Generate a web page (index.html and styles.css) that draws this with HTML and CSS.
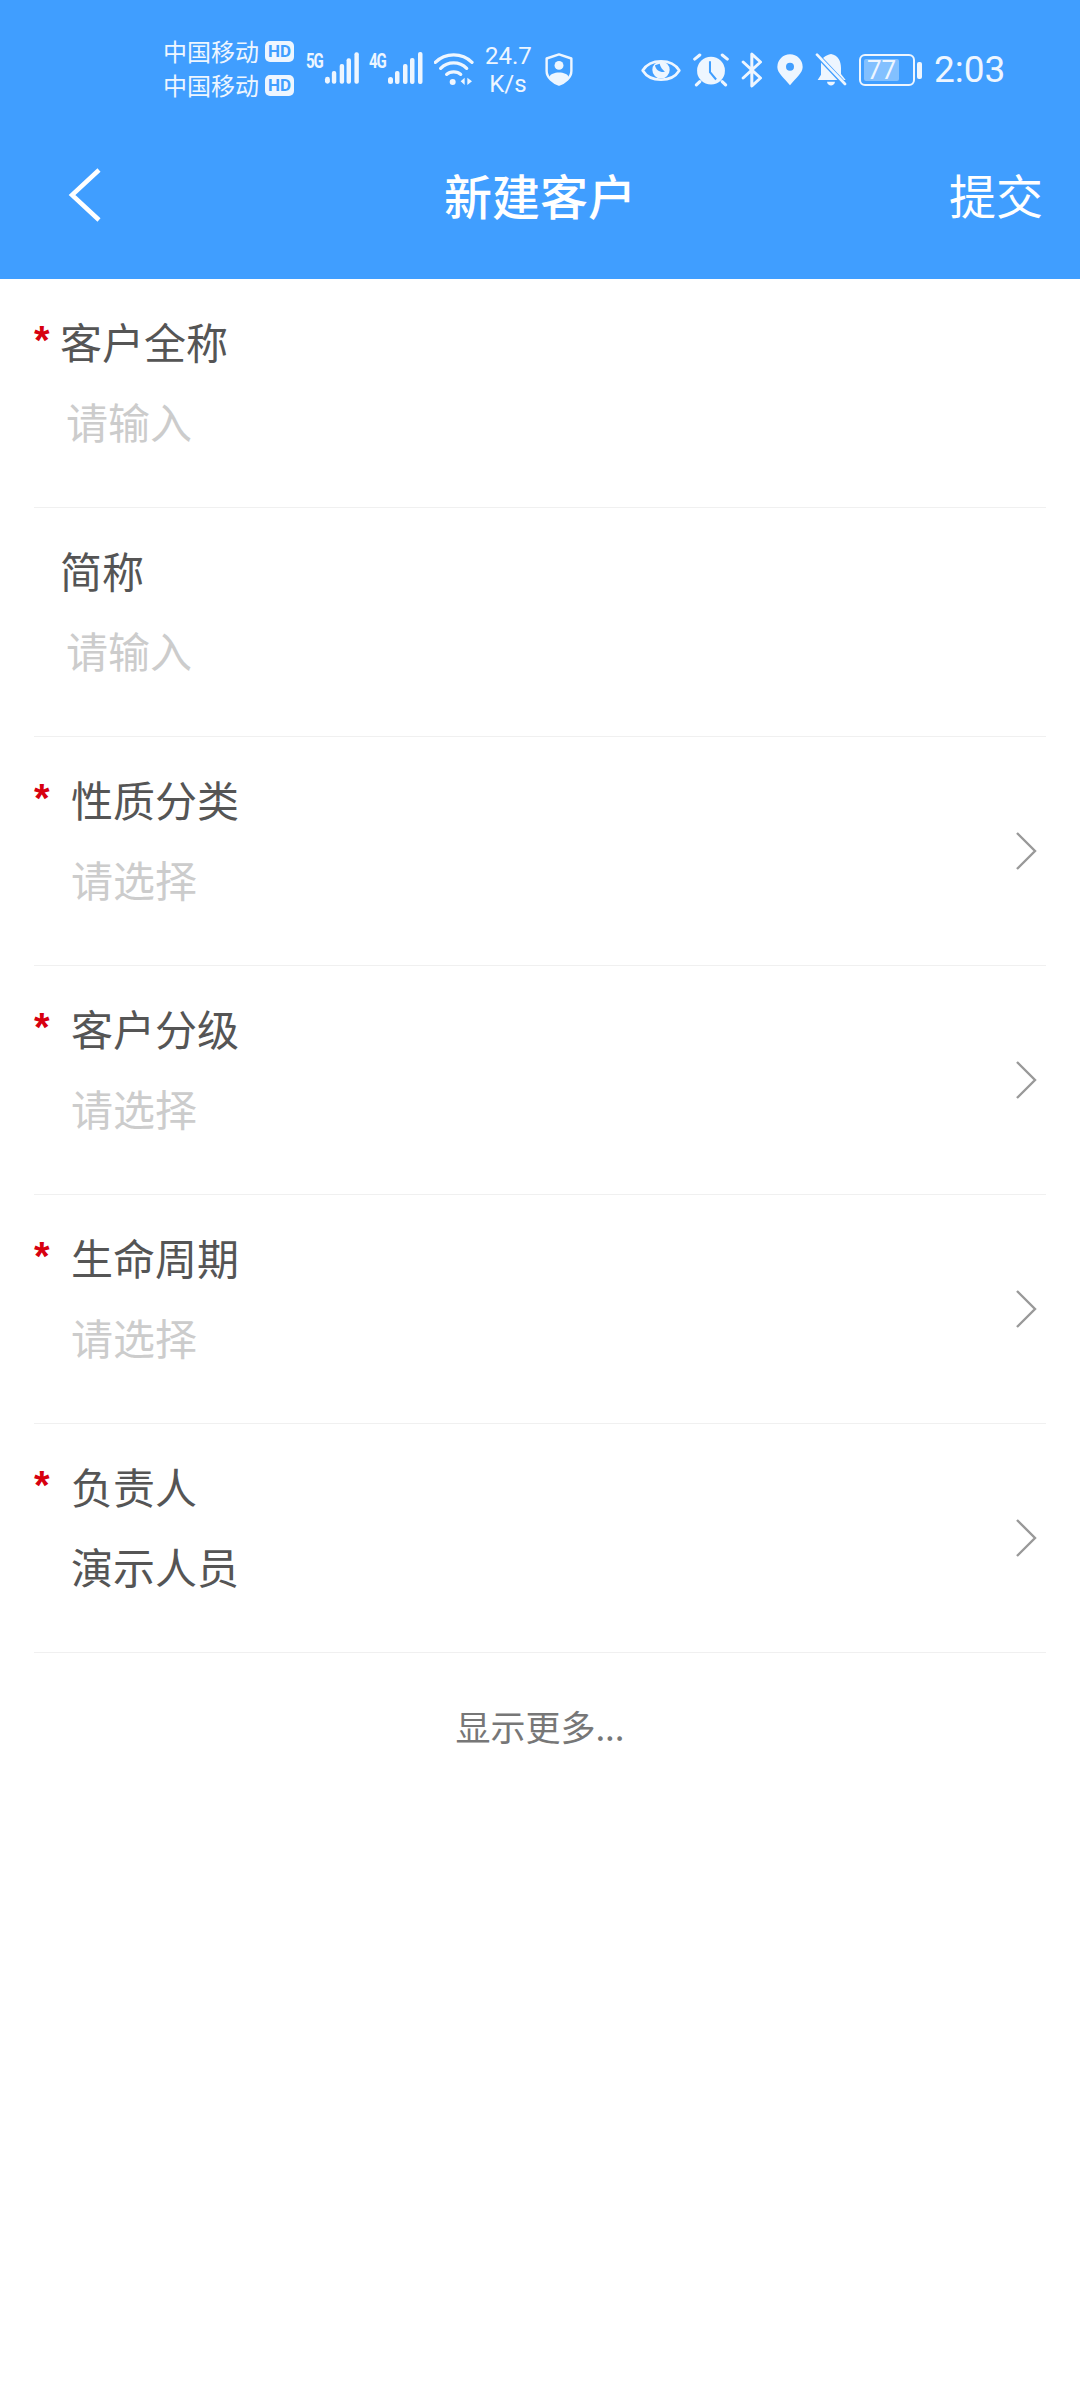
FILE: index.html
```html
<!DOCTYPE html>
<html lang="zh-CN">
<head>
  <meta charset="UTF-8">
  <title>新建客户</title>
  <link rel="stylesheet" href="styles.css">
</head>
<body>
  <header class="header">
    <div class="status-bar">
      <div class="carriers">
        <div class="carrier">中国移动<span class="hd">HD</span></div>
        <div class="carrier">中国移动<span class="hd">HD</span></div>
      </div>

      <div class="net net-first">
        <span class="net-type">5G</span>
        <svg class="signal" viewBox="0 0 36 34"><g fill="#eef6ff"><rect x="1" y="26" width="5" height="7" rx="2.5"/><rect x="8" y="20" width="4.5" height="13" rx="2"/><rect x="16" y="13" width="4.5" height="20" rx="2"/><rect x="23" y="7" width="4.5" height="26" rx="2"/><rect x="31" y="1" width="4.5" height="32" rx="2"/></g></svg>
      </div>
      <div class="net">
        <span class="net-type">4G</span>
        <svg class="signal" viewBox="0 0 36 34"><g fill="#eef6ff"><rect x="1" y="26" width="5" height="7" rx="2.5"/><rect x="8" y="20" width="4.5" height="13" rx="2"/><rect x="16" y="13" width="4.5" height="20" rx="2"/><rect x="23" y="7" width="4.5" height="26" rx="2"/><rect x="31" y="1" width="4.5" height="32" rx="2"/></g></svg>
      </div>

      <svg class="wifi" viewBox="0 0 120 96"><g fill="none" stroke="#eef6ff" stroke-width="10" stroke-linecap="round"><path d="M4 28 C34 -2 84 -2 114 28"/><path d="M20 46 C42 24 76 24 98 46"/><path d="M38 64 C48 54 70 54 80 64"/></g><circle cx="56" cy="87" r="9" fill="#eef6ff"/><path d="M92 74 V96 L80 85Z M100 74 V96 L114 85Z" fill="#eef6ff"/></svg>

      <div class="speed">24.7<br>K/s</div>

      <svg class="shield" viewBox="0 0 80 96"><path d="M40 4 L76 16 V52 C76 72 56 86 40 92 C24 86 4 72 4 52 V16Z" fill="none" stroke="#eef6ff" stroke-width="7" stroke-linejoin="round"/><circle cx="40" cy="36" r="13" fill="#eef6ff"/><path d="M12 70 C16 52 64 52 68 70 C60 82 48 88 40 92 C32 88 20 82 12 70Z" fill="#eef6ff"/></svg>

      <svg class="eye" viewBox="0 0 120 80"><path d="M5 40 C28 3 92 3 115 40 C92 77 28 77 5 40Z" fill="none" stroke="#eef6ff" stroke-width="8" stroke-linejoin="round"/><circle cx="60" cy="38" r="26" fill="#eef6ff"/><path d="M42 24 C44 38 56 46 72 44 C64 38 58 30 56 20Z" fill="#409eff"/></svg>

      <svg class="alarm" viewBox="0 0 106 100"><circle cx="53" cy="52" r="41" fill="#eef6ff"/><path d="M50 24 V56 L68 78" fill="none" stroke="#409eff" stroke-width="6"/><g stroke="#eef6ff" stroke-width="9" stroke-linecap="round"><path d="M5 18 L20 6"/><path d="M101 18 L86 6"/><path d="M10 94 L20 84"/><path d="M96 94 L86 84"/></g></svg>

      <svg class="bluetooth" viewBox="0 0 68 108"><path d="M6 30 L58 78 L32 102 V6 L58 30 L6 78" fill="none" stroke="#eef6ff" stroke-width="9" stroke-linecap="round" stroke-linejoin="round"/></svg>

      <svg class="pin" viewBox="0 0 78 94"><path fill-rule="evenodd" d="M39 93 C22 72 1 56 1 38 A38 38 0 0 1 77 38 C77 56 56 72 39 93Z M39 25 A12 12 0 1 0 39 49 A12 12 0 1 0 39 25Z" fill="#eef6ff"/></svg>

      <svg class="bell" viewBox="0 0 96 100"><path d="M48 2 C70 6 78 24 78 44 V62 L92 80 H8 L18 64 V24 C20 14 32 6 48 2Z" fill="#eef6ff"/><path d="M36 85 H60 C58 100 38 100 36 85Z" fill="#eef6ff"/><path d="M-4 -6 L90 94" stroke="#409eff" stroke-width="14"/><path d="M6 4 L90 92" stroke="#eef6ff" stroke-width="8" stroke-linecap="round"/></svg>

      <div class="battery">
        <div class="battery-body"><div class="battery-fill">77</div></div>
        <div class="battery-nub"></div>
      </div>

      <div class="clock">2:03</div>
    </div>

    <div class="nav-bar">
      <svg class="back" viewBox="0 0 34 56"><path d="M31 3 L4 28 L31 53" fill="none" stroke="#fff" stroke-width="4.5"/></svg>
      <h1 class="title">新建客户</h1>
      <a class="submit">提交</a>
    </div>
  </header>

  <main class="form">
    <div class="row row-input">
      <div class="row-main">
        <div class="label"><span class="star">*</span>客户全称</div>
        <div class="value placeholder">请输入</div>
      </div>
    </div>
    <div class="row row-input">
      <div class="row-main">
        <div class="label"><span class="star star-empty"></span>简称</div>
        <div class="value placeholder">请输入</div>
      </div>
    </div>
    <div class="row row-select">
      <div class="row-main">
        <div class="label"><span class="star">*</span>性质分类</div>
        <div class="value placeholder">请选择</div>
      </div>
      <svg class="chevron" viewBox="0 0 22 40"><path d="M2 2 L20 20 L2 38" fill="none" stroke="#999" stroke-width="2.4"/></svg>
    </div>
    <div class="row row-select">
      <div class="row-main">
        <div class="label"><span class="star">*</span>客户分级</div>
        <div class="value placeholder">请选择</div>
      </div>
      <svg class="chevron" viewBox="0 0 22 40"><path d="M2 2 L20 20 L2 38" fill="none" stroke="#999" stroke-width="2.4"/></svg>
    </div>
    <div class="row row-select">
      <div class="row-main">
        <div class="label"><span class="star">*</span>生命周期</div>
        <div class="value placeholder">请选择</div>
      </div>
      <svg class="chevron" viewBox="0 0 22 40"><path d="M2 2 L20 20 L2 38" fill="none" stroke="#999" stroke-width="2.4"/></svg>
    </div>
    <div class="row row-select">
      <div class="row-main">
        <div class="label"><span class="star">*</span>负责人</div>
        <div class="value">演示人员</div>
      </div>
      <svg class="chevron" viewBox="0 0 22 40"><path d="M2 2 L20 20 L2 38" fill="none" stroke="#999" stroke-width="2.4"/></svg>
    </div>
    <div class="more">显示更多...</div>
  </main>
</body>
</html>
```

FILE: styles.css
```css
* {
  box-sizing: border-box;
}
body {
  margin: 0;
  background: #fff;
  font-family: "Noto Sans CJK SC", "Noto Sans", sans-serif;
}

.header {
  height: 279px;
  background: #409eff;
  color: #fff;
}
.status-bar {
  display: flex;
  align-items: center;
  height: 140px;
  padding-left: 163px;
  color: #eef6ff;
}
.carriers {
  flex: none;
  width: 131px;
  margin-bottom: 4px;
  font-size: 24px;
  line-height: 34px;
  white-space: nowrap;
}
.carrier {
  display: flex;
  align-items: center;
}
.hd {
  width: 30px;
  height: 21px;
  margin-left: 6px;
  border-radius: 5px;
  background: #eef6ff;
  color: #409eff;
  font-family: Roboto, sans-serif;
  font-size: 17px;
  font-weight: 700;
  line-height: 21px;
  text-align: center;
}
.net {
  display: flex;
  align-items: flex-start;
  width: 63px;
  margin-left: 10px;
  margin-bottom: 4px;
}
.net-first {
  margin-left: 12px;
  width: 53px;
}
.net + .net {
  margin-left: 10px;
  width: 55px;
}
.net-type {
  width: 18px;
  font-family: Roboto, sans-serif;
  font-size: 15px;
  font-weight: 700;
  letter-spacing: -1px;
  line-height: 20px;
  transform: scaleY(1.3);
}
.signal {
  width: 36px;
  height: 34px;
}
.wifi {
  width: 40px;
  height: 32px;
  margin-left: 10px;
  margin-bottom: 3px;
}
.speed {
  width: 46px;
  margin-left: 11px;
  font-family: Roboto, sans-serif;
  font-size: 24px;
  line-height: 28px;
  text-align: center;
}
.shield {
  width: 28px;
  height: 33px;
  margin-left: 14px;
  margin-bottom: 1px;
}
.eye {
  width: 40px;
  height: 27px;
  margin-left: 68px;
}
.alarm {
  width: 36px;
  height: 34px;
  margin-left: 12px;
}
.bluetooth {
  width: 23px;
  height: 36px;
  margin-left: 12px;
}
.pin {
  width: 26px;
  height: 32px;
  margin-left: 13px;
}
.bell {
  width: 32px;
  height: 34px;
  margin-left: 12px;
}
.battery {
  display: flex;
  align-items: center;
  margin-left: 12px;
}
.battery-body {
  width: 56px;
  height: 32px;
  padding: 3px;
  border: 2px solid #eef6ff;
  border-radius: 6px;
}
.battery-fill {
  width: 35px;
  height: 100%;
  border-radius: 2px;
  background: rgba(255, 255, 255, 0.35);
  font-family: Roboto, sans-serif;
  font-size: 26px;
  line-height: 22px;
  text-align: center;
}
.battery-nub {
  width: 5px;
  height: 17px;
  margin-left: 2px;
  border-radius: 2px;
  background: #eef6ff;
}
.clock {
  margin-left: 12px;
  font-family: Roboto, sans-serif;
  font-size: 37px;
  line-height: 44px;
}

.nav-bar {
  display: flex;
  align-items: center;
  justify-content: space-between;
  position: relative;
  height: 112px;
  padding: 0 37px 5px 68px;
}
.back {
  width: 34px;
  height: 56px;
  margin-top: 2px;
}
.title {
  position: absolute;
  left: 0;
  right: 0;
  margin: 0;
  font-size: 48px;
  font-weight: 500;
  line-height: 60px;
  text-align: center;
  pointer-events: none;
}
.submit {
  font-size: 47px;
  line-height: 60px;
}

.form {
  padding: 0 34px;
}
.row {
  display: flex;
  align-items: center;
  height: 229px;
  padding-top: 31px;
  padding-bottom: 56px;
  border-bottom: 1px solid #f0f0f0;
}
.row-main {
  flex: 1;
}
.row-select {
  position: relative;
}
.label {
  display: flex;
  color: #555;
  font-size: 42px;
  line-height: 60px;
}
.star {
  width: 26px;
  color: #d7000f;
  font-family: "Liberation Sans", sans-serif;
  font-size: 40px;
  font-weight: 700;
  line-height: 58px;
}
.row-select .star {
  width: 37px;
}
.value {
  margin-top: 20px;
  color: #555;
  font-size: 42px;
  line-height: 60px;
}
.row-input .value {
  padding-left: 32px;
}
.row-select .value {
  padding-left: 37px;
}
.placeholder {
  color: #ccc;
}
.chevron {
  position: absolute;
  right: 9px;
  top: 94px;
  width: 22px;
  height: 40px;
}
.more {
  margin-top: 47px;
  color: #777;
  font-size: 35px;
  line-height: 52px;
  text-align: center;
}
```
